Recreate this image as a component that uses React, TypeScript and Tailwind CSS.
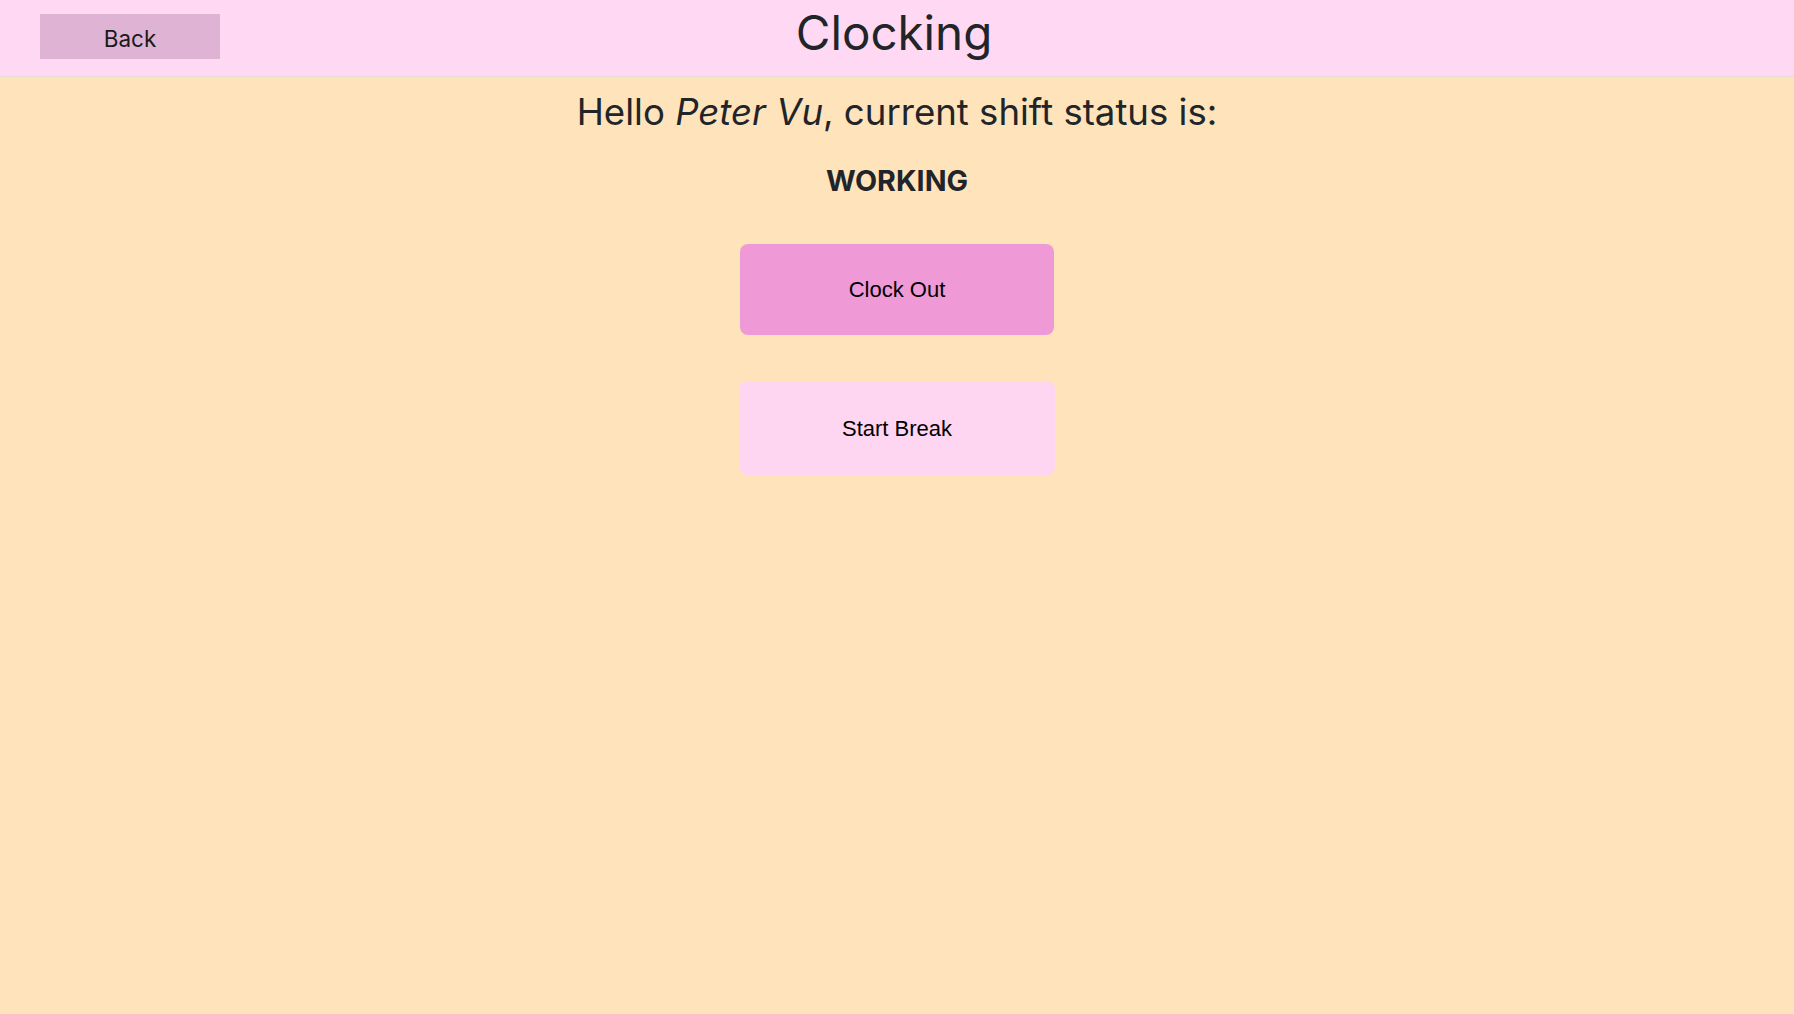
import React from 'react';

export default function App() {
  return (
    <div className="min-h-screen bg-[#ffe3bb] text-[#212529]" style={{ fontFamily: 'Inter, "Noto Sans", sans-serif' }}>
      {/* Header */}
      <header className="grid grid-cols-[1fr_auto_1fr] h-[77px] bg-[#ffd9f3] border-b border-[#e2dcdc]">
        <div className="flex items-start">
          <button className="ml-[40px] mt-[14px] w-[180px] h-[45px] pt-[4px] bg-[#dfb3d3] text-[22.5px] text-[#1a1a1a]">
            Back
          </button>
        </div>
        <h1 className="mt-[4px] text-[47.5px] leading-[1.2] font-normal -translate-x-[3px]">Clocking</h1>
        <div />
      </header>

      <main className="flex flex-col items-center">
        <p className="mt-[14px] text-[36.6px] leading-[1.2]">
          Hello <em className="italic">Peter Vu</em>, current shift status is:
        </p>
        <h3 className="mt-[29px] text-[28.7px] leading-[1.2] font-bold">WORKING</h3>

        <div className="mt-[46px] flex flex-col items-center gap-[46px]" style={{ fontFamily: '"Liberation Sans", Arial, sans-serif' }}>
          <button className="w-[314px] h-[91px] rounded-[8px] bg-[#ef9ad6] text-[22px] text-black">
            Clock Out
          </button>
          <button className="w-[316px] h-[94px] rounded-[8px] bg-[#ffd6f2] text-[22px] text-black">
            Start Break
          </button>
        </div>
      </main>
    </div>
  );
}
